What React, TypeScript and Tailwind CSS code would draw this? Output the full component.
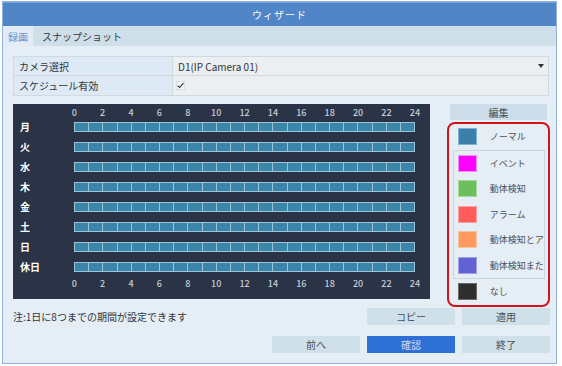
import React from "react";

const days = ["月", "火", "水", "木", "金", "土", "日", "休日"];
const hours = [0, 2, 4, 6, 8, 10, 12, 14, 16, 18, 20, 22, 24];

const legend = [
  { label: "ノーマル", color: "bg-[#3b80aa]", ring: "border-[#7fb2d2]" },
  { label: "イベント", color: "bg-[#ff00ff]", ring: "border-[#f08ef0]" },
  { label: "動体検知", color: "bg-[#6cbf5c]", ring: "border-[#a6d89c]" },
  { label: "アラーム", color: "bg-[#ff5c5c]", ring: "border-[#f7a0a0]" },
  { label: "動体検知とア", color: "bg-[#ff9a5c]", ring: "border-[#f7c4a0]" },
  { label: "動体検知また", color: "bg-[#6262d2]", ring: "border-[#a0a0e4]" },
  { label: "なし", color: "bg-[#2e2e2e]", ring: "border-[#6a6a6a]" },
];

const font = { fontFamily: '"Noto Sans CJK JP", "Noto Sans", sans-serif' };

const HourLabels = () => (
  <div className="flex h-[12px] ml-[47px] w-[369px] text-[9px] leading-[12px] font-medium text-[#c3ccd6]">
    {hours.map((h) => (
      <div key={h} className="flex-1 text-center">
        {h}
      </div>
    ))}
  </div>
);

const Bar = () => (
  <div className="flex h-[10px] w-[341px] border border-[#9dc3d7]">
    {Array.from({ length: 24 }).map((_, i) => (
      <div
        key={i}
        className={`flex-1 bg-[#3a86aa] ${i < 23 ? "border-r border-[#9dc3d7]" : ""}`}
      />
    ))}
  </div>
);

const Btn = ({ label, primary }: { label: string; primary?: boolean }) => (
  <div
    className={`w-[88px] h-[17px] flex items-center justify-center text-[10px] ${
      primary ? "bg-[#2f70d6] text-[#cfdcf2]" : "bg-[#d0e0ea] text-[#4a4f55]"
    }`}
  >
    {label}
  </div>
);

const LegendItem = ({ item, inner }: { item: (typeof legend)[number]; inner?: boolean }) => (
  <div className={`flex items-center h-[25.5px] ${inner ? "pl-[4px]" : "pl-[9px]"}`}>
    <div className={`w-[19px] h-[17px] shrink-0 border ${item.ring} ${item.color}`} />
    <span className="ml-[13px] text-[9px] text-[#4a4f55] whitespace-nowrap">{item.label}</span>
  </div>
);

export default function App() {
  return (
    <div className="w-[562px] h-[366px] bg-white pt-[1px] pl-[2px]" style={font}>
      <div className="w-[555px] h-[363px] border border-[#8fb3dc] bg-[#e5edf5] flex flex-col">
        {/* title */}
        <div className="h-[24px] bg-[#5085c7] border-t border-[#7aa3d8] flex items-center justify-center text-[10px] text-white tracking-[1px]">
          ウィザード
        </div>

        {/* tabs */}
        <div className="h-[20px] bg-[#cfdfe9] flex items-stretch text-[10px]">
          <div className="w-[30px] bg-[#e3ecf4] text-[#5d9bd2] flex items-center justify-center">
            録画
          </div>
          <div className="ml-[9px] text-[#333a40] flex items-center">スナップショット</div>
        </div>

        <div className="flex flex-col pl-[10px] pr-[6px] pt-[10px]">
          {/* form */}
          <div className="w-[536px] border border-[#cfd9e1] text-[10px]">
            <div className="flex h-[19px] border-b border-[#cfd9e1]">
              <div className="w-[159px] bg-[#dde9f4] border-r border-[#cfd9e1] pl-[5px] flex items-center text-[#30353a]">
                カメラ選択
              </div>
              <div className="flex-1 bg-[#eceff2] pl-[5px] pr-[4px] flex items-center justify-between text-[#30353a]">
                <span>D1(IP Camera 01)</span>
                <svg width="6" height="4" viewBox="0 0 6 4">
                  <path d="M0 0 L6 0 L3 4 Z" fill="#333" />
                </svg>
              </div>
            </div>
            <div className="flex h-[19px]">
              <div className="w-[159px] bg-[#dde9f4] border-r border-[#cfd9e1] pl-[5px] flex items-center text-[#30353a]">
                スケジュール有効
              </div>
              <div className="flex-1 bg-[#eceff2] pl-[3px] flex items-center">
                <div className="w-[9px] h-[9px] bg-[#f4f6f8] border border-[#d6dde3] flex items-center justify-center">
                  <svg width="8" height="7" viewBox="0 0 8 7">
                    <path d="M0.8 3.6 L3 5.8 L7.4 0.8" stroke="#222" strokeWidth="1.2" fill="none" />
                  </svg>
                </div>
              </div>
            </div>
          </div>

          {/* main */}
          <div className="flex mt-[8px]">
            <div className="w-[420px] h-[195px] bg-[#2b3446] pt-[3px] flex flex-col">
              <HourLabels />
              <div className="flex flex-col gap-[10px] mt-[3px]">
                {days.map((d) => (
                  <div key={d} className="flex items-center h-[10px]">
                    <div className="w-[61px] pl-[7px] text-[10px] font-bold text-white leading-none">
                      {d}
                    </div>
                    <Bar />
                  </div>
                ))}
              </div>
              <div className="mt-[6px]">
                <HourLabels />
              </div>
            </div>

            <div className="ml-[17px] w-[104px] flex flex-col">
              <div className="mx-[3px] h-[16px] bg-[#cddeea] flex items-center justify-center text-[10px] text-[#4a4f55]">
                編集
              </div>
              <div className="mt-[2px] border-2 border-[#d3121c] rounded-[8px] flex flex-col overflow-hidden">
                <LegendItem item={legend[0]} />
                <div className="ml-[4px] mr-[3px] border border-[#c9d5de]">
                  {legend.slice(1, 6).map((it) => (
                    <LegendItem key={it.label} item={it} inner />
                  ))}
                </div>
                <LegendItem item={legend[6]} />
              </div>
            </div>
          </div>

          {/* buttons */}
          <div className="flex items-center mt-[1px]">
            <div className="flex-1 text-[10px] text-[#30353a]">注:1日に8つまでの期間が設定できます</div>
            <div className="flex gap-[7px]">
              <Btn label="コピー" />
              <Btn label="適用" />
            </div>
          </div>
          <div className="flex justify-end gap-[7px] mt-[11px]">
            <Btn label="前へ" />
            <Btn label="確認" primary />
            <Btn label="終了" />
          </div>
        </div>
      </div>
    </div>
  );
}
